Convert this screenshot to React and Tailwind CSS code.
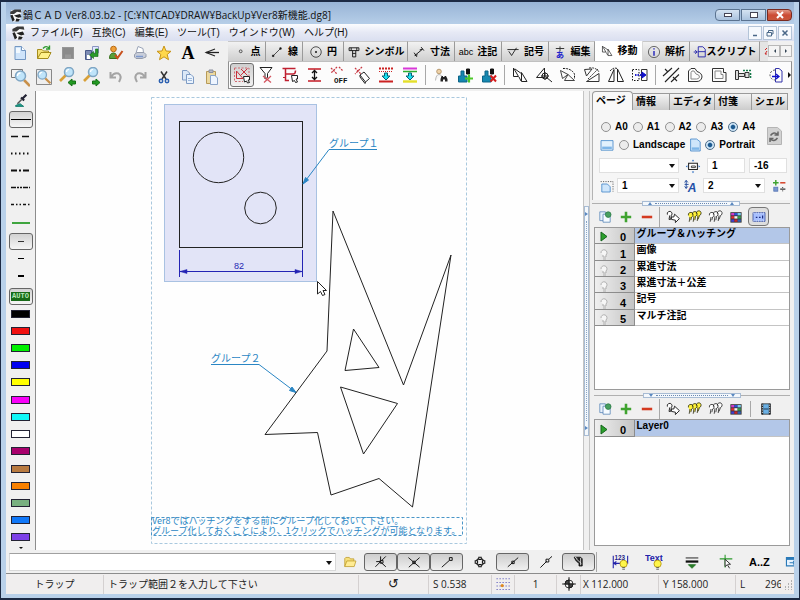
import React from "react";

const UI = "font-['Open_Sans','Noto_Sans_CJK_JP',sans-serif]";
const GOTHIC = "font-['Liberation_Sans','Noto_Sans_CJK_JP',sans-serif]";

/* ---------- drawing helpers ---------- */

function Icon({ size = 20, children }) {
  return (
    <svg width={size} height={size} viewBox="0 0 20 20" fill="none" stroke="#111" strokeWidth="1" className="shrink-0" aria-hidden="true">
      {children}
    </svg>
  );
}

const Lens = () => (
  <>
    <path d="M12 12 L18 18" stroke="#c8904a" strokeWidth="2.6" />
    <circle cx="8.500" cy="8" r="5" fill="#bfe4fa" stroke="#7fa6c4" strokeWidth="1.500" />
    <path d="M5.500 8 A3 3 0 0 1 8.500 5" stroke="#fff" strokeWidth="1.300" />
  </>
);
const SmallLens = () => (
  <>
    <path d="M9 9 L3 15" stroke="#d8a038" strokeWidth="2.6" />
    <circle cx="12" cy="6" r="4.500" fill="#bfe4fa" stroke="#7fa6c4" strokeWidth="1.500" />
    <path d="M9.500 6 A2.500 2.500 0 0 1 12 3.500" stroke="#fff" strokeWidth="1.200" />
  </>
);
const People = () => (
  <>
    <path d="M3.500 17 V11 H6 V6 H9 V11 H12 V17 Z" fill="#1688b0" stroke="#0c6488" />
    <path d="M11.500 4 h3 v5 h-3 z" fill="#111" />
  </>
);
const Bulb = () => (
  <>
    <circle cx="14" cy="12" r="4" fill="#fff64a" stroke="#b89a10" />
    <path d="M12.500 16 h3 M12.500 18 h3" stroke="#555" />
  </>
);
const RedRow = () => <path d="M3 16.500 H17" stroke="#c22" strokeWidth="2" />;
const Arrow = () => <path d="M8.500 8 h3 v3 h2.500 l-4 4 l-4 -4 h2.500 z" fill="#18e0f0" stroke="#0a6070" />;

const ICONS = {
  doc: (
    <>
      <path d="M5 3.500 H11.500 L15.500 7.500 V16.500 H5 Z" fill="#cfe4fa" stroke="#7397c2" />
      <path d="M11.500 3.500 V7.500 H15.500" fill="#fff" stroke="#7397c2" />
      <path d="M6 5 h4 v5 h-4z" fill="#f2f9ff" stroke="none" />
    </>
  ),
  open: (
    <>
      <path d="M3.500 15.500 V6.500 H8 L9.500 8 H14.500 V10" fill="#f5e27a" stroke="#a58c1c" />
      <path d="M3.500 15.500 L7 9.500 H17 L14 15.500 Z" fill="#fff08a" stroke="#a58c1c" />
      <path d="M9 5.500 Q12 2 15 5 M15.500 2.500 V6 H12" stroke="#2f9a2f" strokeWidth="1.400" />
    </>
  ),
  save: (
    <>
      <rect x="4.500" y="4.500" width="11" height="11" fill="#8b8b8b" stroke="#979797" />
      <path d="M7 11.500 h6 v4 h-6 z" fill="#999" stroke="none" />
    </>
  ),
  saveas: (
    <>
      <path d="M10.500 3.500 H16.500 V10 H10.500 Z" fill="#dfe8ff" stroke="#8a94c0" />
      <path d="M3.500 7.500 H9.500 V16.500 H3.500 Z" fill="#7d8cb4" stroke="#4a5a88" />
      <path d="M5 12 h3 v4 h-3z" fill="#fff" stroke="none" />
      <path d="M7.500 12 L11.500 8.500 V10.500 H13.500 V6 H16 V13.500 H11.500 V15.500 Z" fill="#2a9a2a" stroke="#116611" strokeWidth=".6" />
    </>
  ),
  usercheck: (
    <>
      <circle cx="7.500" cy="6" r="2.800" fill="#f0a038" stroke="#b86a10" />
      <path d="M3.500 15.500 Q3.500 10 7.500 10 Q11 10 11 15.500 Z" fill="#58a038" stroke="#38701c" />
      <path d="M9 12 L11.500 15 L16.500 8" stroke="#c8501c" strokeWidth="2" />
    </>
  ),
  print: (
    <>
      <path d="M6 10 L8 3.500 L13 5.500 L13.500 10" fill="#fff" stroke="#9aa4b8" />
      <path d="M4.500 11.500 L7 9.500 H14 L16 11.500 V14 L12 15.500 H6 L4.500 14 Z" fill="#c9ceda" stroke="#959cac" />
      <path d="M6 13.500 h7" stroke="#7d98cc" strokeWidth="1.500" />
    </>
  ),
  star: <path d="M10 3 L12 8 L17 8.300 L13.200 11.500 L14.500 16.700 L10 13.800 L5.500 16.700 L6.800 11.500 L3 8.300 L8 8 Z" fill="#ffd84c" stroke="#c89418" />,
  leader: (
    <>
      <path d="M4 9.500 H17" stroke="#222" strokeWidth="1.300" />
      <path d="M13 6 L4 9.500 L13 13" stroke="#222" strokeWidth="1.100" />
    </>
  ),
  zoomwin: (
    <>
      <path d="M1.500 2.500 H12.500 V10.500 H1.500 Z" fill="#f4f4f4" stroke="#777" />
      <g transform="translate(2 1)"><Lens /></g>
    </>
  ),
  zoomfit: (
    <>
      <path d="M2.500 2.500 H17.500 V17.500 H2.500 Z" fill="#eee" stroke="#888" />
      <g transform="translate(1 1) scale(.85)"><Lens /></g>
    </>
  ),
  zoomprev: (
    <>
      <g transform="translate(-1 -1)"><SmallLens /></g>
      <path d="M10 15.500 L14 12 V14 H17.500 V17 H14 V19 Z" fill="#229a22" stroke="#157015" />
    </>
  ),
  zoomnext: (
    <>
      <g transform="translate(-1 -1)"><SmallLens /></g>
      <path d="M18 15.500 L14 12 V14 H10.500 V17 H14 V19 Z" fill="#229a22" stroke="#157015" />
    </>
  ),
  undo: <path d="M4.500 5 V10.500 H10 M5 10 Q8 5 12.500 6.500 Q16.500 9 13 15" stroke="#a4a4a4" strokeWidth="2" />,
  redo: <path d="M15.500 5 V10.500 H10 M15 10 Q12 5 7.500 6.500 Q3.500 9 7 15" stroke="#a4a4a4" strokeWidth="2" />,
  cut: (
    <>
      <path d="M7 4.500 L12 12 M13 4.500 L8 12" stroke="#333" strokeWidth="1.500" />
      <circle cx="7" cy="14" r="1.700" stroke="#2a5fb0" strokeWidth="1.500" />
      <circle cx="13" cy="14" r="1.700" stroke="#2a5fb0" strokeWidth="1.500" />
    </>
  ),
  copy: (
    <>
      <path d="M4.500 3.500 H9 L11.500 6 V13 H4.500 Z" fill="#dbe8f7" stroke="#7f9cc4" />
      <path d="M8.500 7.500 H13 L15.500 10 V16.500 H8.500 Z" fill="#eaf3fd" stroke="#7f9cc4" />
      <path d="M10 11.500 h4 M10 13.500 h4" stroke="#9db8dc" />
    </>
  ),
  paste: (
    <>
      <path d="M4.500 4.500 H13.500 V16.500 H4.500 Z" fill="#ecd9a0" stroke="#b79a58" />
      <path d="M7 3 h4 v2.500 h-4 z" fill="#b8bcc8" stroke="#8a8e9c" />
      <path d="M8.500 8.500 H13 L15.500 11 V17.500 H8.500 Z" fill="#eef5ff" stroke="#8aa4c8" />
    </>
  ),
  trap: (
    <>
      <path d="M2.500 3 H17 V12 M2.500 3 V16.500 H11" stroke="#d06a70" strokeDasharray="2 1.500" />
      <path d="M4.500 6 V13.500 H11 Z M9 10 L15.500 3.500 M9 4 L15.500 10.500" stroke="#c8303c" />
      <path d="M11.500 11.500 H17.500 V15 H16 L17.500 17.500 L15.500 18 L14.500 16 L12.500 17 Z" stroke="#222" fill="#fff" />
    </>
  ),
  filter: (
    <>
      <path d="M4 2.500 H16 L11.500 8.500 V12.500 L9 14 V8.500 Z" fill="#fff" stroke="#222" />
      <path d="M7 11 L15 17.500 M15 11 L8 17.500" stroke="#d45560" strokeWidth="1.300" />
    </>
  ),
  path: (
    <>
      <path d="M2.500 3.500 H15.500 M5.500 3.500 V15.500 H9 M5.500 9 H13 Q15.500 9 15.500 5.500" stroke="#c02030" strokeWidth="1.500" />
      <path d="M3 12.500 h2" stroke="#c02030" />
      <path d="M11.500 10.500 H17.500 V14 H16 L17.500 17 L15.500 17.500 L14.500 15.500 L12.500 16.500 Z" stroke="#222" fill="#fff" />
    </>
  ),
  stretch: (
    <>
      <path d="M4 4 H17 M4 16 H17" stroke="#c41a24" strokeWidth="1.500" />
      <path d="M10.500 6 V14 M8 8 L10.500 5.500 L13 8 M8 12 L10.500 14.500 L13 12" stroke="#111" strokeWidth="1.300" />
    </>
  ),
  off: (
    <>
      <path d="M3 3 L9 9 M9 2 L3 8 M11 2 L15 6" stroke="#c83a44" strokeDasharray="2 1" strokeWidth="1.300" />
      <text x="6" y="17.500" fontSize="7.500" fontWeight="700" fontFamily="Liberation Mono" fill="#111" stroke="none">OFF</text>
    </>
  ),
  erase: (
    <>
      <path d="M3 3 L9 9 M10 2 L3 9" stroke="#c83a44" strokeDasharray="2 1" strokeWidth="1.300" />
      <path d="M8 10 L12 7 L17.500 13.500 L13.500 17 Z M8 10 V12 L13 18.500 L13.500 17" fill="#fff" stroke="#222" />
    </>
  ),
  dashdown: (
    <>
      <path d="M3 3.500 H17" stroke="#c22" strokeWidth="2" strokeDasharray="2 1" />
      <path d="M3 6.500 H17" stroke="#c22" strokeDasharray="1 1" />
      <Arrow />
      <RedRow />
    </>
  ),
  colordown: (
    <>
      <path d="M3 3.500 H17" stroke="#d838d8" strokeWidth="2" />
      <path d="M3 6.500 H17" stroke="#2fae2f" strokeWidth="1.500" />
      <Arrow />
      <path d="M3 16.500 H17" stroke="#e4e02a" strokeWidth="2.400" />
    </>
  ),
  finduser: (
    <>
      <circle cx="8" cy="6.500" r="2.300" fill="#efd2a8" stroke="#b89a70" />
      <path d="M4.500 15.500 Q5 9.500 8 9.500 Q10 9.500 10.500 11" fill="#f6f6f6" stroke="#bbb" />
      <path d="M9.500 14 l1-3 l1.500 0 v1 h1.500 v-1 h1.500 l1.500 3 v2.500 h-2.500 v-2 h-2 v2 h-2.500z" fill="#222" stroke="none" />
    </>
  ),
  adduser: (
    <>
      <People />
      <path d="M14 9.500 V17.500 M10 13.500 H18" stroke="#4cc828" strokeWidth="2.200" />
    </>
  ),
  deluser: (
    <>
      <People />
      <path d="M11.500 10.500 L17 16.500 M17 10.500 L11.500 16.500" stroke="#d41c1c" strokeWidth="2" />
    </>
  ),
  move: <path d="M3.500 3 V11.500 H8.500 Z M11.500 7.500 V16.500 H17 Z M5 4 L12 9 M9 12 L11 16" stroke="#222" />,
  movept: (
    <>
      <path d="M10.500 3 V12.500 H2.500 Z" stroke="#222" />
      <circle cx="11" cy="11" r="3" stroke="#222" />
      <path d="M11 7 V15 M7 11 H15 M12 12 L18 17" stroke="#222" />
    </>
  ),
  rotate: (
    <>
      <path d="M2.500 5.500 L10 9.500 L4.500 13.500 Z M6.500 15.500 H16.500 L10 9.500 Z" stroke="#444" />
      <path d="M5 3.500 Q13 3 16.500 9 V14" strokeDasharray="2 1" />
    </>
  ),
  rotate2: (
    <>
      <path d="M2.500 4.500 L10 4 L4.500 11 Z M4.500 16.500 L17 8.500 V16.500 Z" stroke="#333" />
      <path d="M6 14 L16 4 M7 3 Q14 2 17 7" strokeDasharray="2 1" stroke="#333" />
    </>
  ),
  mirror: (
    <>
      <path d="M8 4.500 V16.500 H2.500 Z M11.500 4 L17.500 16.500 H11.500 Z" stroke="#222" />
      <path d="M4 6 Q8 1.500 12 4" strokeDasharray="2 1" />
    </>
  ),
  copymove: (
    <>
      <path d="M2.500 4.500 H9 V15.500 H2.500 Z" strokeDasharray="1.500 1.500" />
      <path d="M11.500 4.500 H17 V15.500 H11.500 Z" fill="#fff" stroke="#333" />
      <path d="M5 10 H13" stroke="#22c" strokeWidth="2" strokeDasharray="1.500 1" />
      <path d="M12 7 L16 10 L12 13 Z" fill="#11c" stroke="#11c" />
    </>
  ),
  parallel: <path d="M2 11 L11 3 M4 17 L18 3 M10 17 L18 9.500 M4 4 L7 7 M12 12 l4 4" stroke="#222" strokeWidth="1.100" />,
  offset: (
    <>
      <path d="M3.500 6 L6 3.500 H10 L12 6.500 Q17 8 17 12 Q16 16.500 12 16.500 H3.500 Z" stroke="#333" />
      <path d="M6 7.500 L7 6 H9 L11 9 Q14.500 9.500 14.500 12 Q14 14 11.500 14 H6 Z" stroke="#888" />
    </>
  ),
  offset2: (
    <>
      <path d="M3.500 3.500 H14.500 V7.500 H17 V16.500 H3.500 Z" stroke="#333" />
      <path d="M6 6 H12 V9.500 H14 V13.500 H6 Z" stroke="#888" />
    </>
  ),
  bolt: (
    <>
      <path d="M2.500 5.500 H5.500 V14.500 H2.500 Z M5.500 8.500 H11.500 V11.500 H5.500 Z M12 7.500 H16 V12.500 H12 Z" stroke="#333" fill="#ddd" />
      <path d="M10 5.500 H18 M17.500 8 v5" stroke="#167a4a" strokeWidth="1.600" strokeDasharray="2 1" />
    </>
  ),
  convert: (
    <>
      <path d="M10 5 A5 5 0 1 0 10 15" strokeDasharray="2 1.500" stroke="#555" />
      <path d="M10.500 3.500 H14 L17 6 V17 H10.500 Z" stroke="#33a" />
      <path d="M7 11.500 H13 M11 9 l3 2.500 l-3 2.500" stroke="#11c" strokeWidth="1.300" />
    </>
  ),
  dot: <circle cx="11" cy="9" r="2" stroke="#222" />,
  line: <path d="M4.500 15.500 L15 5 M3.500 14.500 h2 v2 h-2z M14 4 h2 v2 h-2z" fill="#222" strokeWidth="1" />,
  circle: (
    <>
      <circle cx="10" cy="10" r="7.500" />
      <circle cx="10" cy="10" r="1" fill="#111" />
    </>
  ),
  symbol: <path d="M3 4 H17 V8 H3 Z M8 8 V17 H12.500 V8 M8 12 H12.500 M6 4 v4 M14 4 v4" strokeWidth="1.300" />,
  dim: <path d="M4 15 L15 6 M3 11 L7 17 M13 3 L17 8 M4 15 l4-1 M15 6 l-4 1" strokeWidth="1.300" />,
  check: <path d="M2 6.500 H18 M4 9 L8 15 L15 4" strokeWidth="1.200" />,
  edit: (
    <>
      <path d="M4 5 H16 M10 2 V9" stroke="#333" strokeWidth="1.400" />
      <text x="4" y="18" fontSize="12" fontWeight="700" fontFamily="Noto Sans CJK JP" fill="#22c" stroke="none">あ</text>
    </>
  ),
  info: (
    <>
      <circle cx="10" cy="10" r="8" stroke="#333" />
      <path d="M10 4.500 v2 M10 8.500 v7" stroke="#22b" strokeWidth="2" />
    </>
  ),
  script: (
    <>
      <path d="M7.500 2.500 H14 L17.500 6 V17 H7.500 V2.500 M7.500 9.500 H17.500" stroke="#22a" strokeWidth="1.300" />
      <path d="M1 10 H6 M3 7.500 L6 10 L3 12.500" stroke="#22a" strokeWidth="1.300" />
    </>
  ),
  picker: (
    <>
      <path d="M16 3 L12 7 M13.500 9.500 L10 6" stroke="#223" strokeWidth="2.400" />
      <path d="M11 8 L6 13" stroke="#555" strokeWidth="1.600" />
      <path d="M4 15 L9 13 L13 16 H4 Z" fill="#1c9a8a" stroke="#147a6c" />
    </>
  ),
  layers: (
    <>
      <path d="M3.500 3.500 H10.500 V14.500 H3.500 Z" fill="#e8f1fb" stroke="#5a86b8" />
      <path d="M7.500 6.500 H16.500 V16.500 H7.500 Z" fill="#f6fbff" stroke="#5a86b8" />
      <circle cx="14" cy="7" r="3.500" fill="#48a060" stroke="#2a7a44" />
    </>
  ),
  plus: <path d="M10 3.500 V16.500 M3.500 10 H16.500" stroke="#3fa32f" strokeWidth="3.200" />,
  minus: <path d="M3.500 10 H16.500" stroke="#d43a20" strokeWidth="3.200" />,
  hand: <path d="M3 7 a3 3 0 1 1 5 1 l-1 5 h-2 l1 -5 M8 13 V10 H11 L12 6.500 L18 12 L13 17 V14 Z" stroke="#222" strokeWidth="1.200" fill="#fff" />,
  bulbson: <path d="M3 8 a3 3 0 1 1 4 2 l-1 4 M8 7 a3 3 0 1 1 4 2 l-1 5 M13 6 a3 3 0 1 1 4 2 l-2 5 M5 10 l-1 6 M10 9 l-1 7 M15 8 l-1 7" fill="#fff23a" stroke="#2c2c10" />,
  bulbsoff: <path d="M3 8 a3 3 0 1 1 4 2 l-1 4 M8 7 a3 3 0 1 1 4 2 l-1 5 M13 6 a3 3 0 1 1 4 2 l-2 5 M5 10 l-1 6 M10 9 l-1 7 M15 8 l-1 7" fill="#fff" stroke="#222" />,
  palette: (
    <g stroke="none">
      <rect x="3" y="4" width="14" height="13" fill="#333" />
      <rect x="4" y="5" width="4" height="3" fill="#d03ac8" />
      <rect x="8" y="5" width="4" height="3" fill="#2c50d8" />
      <rect x="12" y="5" width="4" height="3" fill="#7ad0f0" />
      <rect x="4" y="9" width="4" height="3" fill="#e03030" />
      <rect x="8" y="9" width="4" height="3" fill="#f4f4f4" />
      <rect x="12" y="9" width="4" height="3" fill="#34a048" />
      <rect x="4" y="13" width="4" height="3" fill="#4040d0" />
      <rect x="8" y="13" width="4" height="3" fill="#c82828" />
      <rect x="12" y="13" width="4" height="3" fill="#3060b8" />
    </g>
  ),
  film2: (
    <>
      <path d="M2.500 4.500 H17.500 V15.500 H2.500 Z" fill="#a8c0ff" stroke="#3a50a0" />
      <path d="M3 5 H18 M3 15 H18" stroke="#fff" strokeDasharray="1 2" strokeWidth="1.500" />
      <path d="M6 10.500 h2 M10 10.500 h2 M14.500 8 v4" stroke="#1c2c80" strokeWidth="1.500" />
    </>
  ),
  film: (
    <>
      <path d="M4.500 3.500 H15.500 V16.500 H4.500 Z" fill="#6ab0e4" stroke="#333" />
      <path d="M5.500 3.500 V17 M14.500 3.500 V17" stroke="#222" strokeWidth="2" />
      <path d="M5.500 4.500 V16 M14.500 4.500 V16" stroke="#eee" strokeDasharray="1.500 1.500" />
      <path d="M7 10 h6" stroke="#123" />
    </>
  ),
  landscape: (
    <>
      <path d="M2.500 4.500 H17.500 V16.500 H2.500 Z" fill="#e2f1fd" stroke="#3f84c8" />
      <path d="M4 13.500 H16" stroke="#7eb6e8" strokeWidth="3" />
    </>
  ),
  portrait: (
    <>
      <path d="M4.500 2.500 H12 L16.500 6 V17.500 H4.500 Z" fill="#cfe6fb" stroke="#3f84c8" />
      <path d="M6 14.500 H15" stroke="#7eb6e8" strokeWidth="3" />
    </>
  ),
  refresh: (
    <>
      <path d="M3.500 1.500 H13.500 L17.500 5 V18.500 H3.500 Z" fill="#d2d2d2" stroke="#b4b4b4" />
      <path d="M6.500 9.500 Q10 5 13.500 8.500 M14 5.500 V9 H10.500 M13.500 12 Q10 16.500 6.500 13 M6 16 V12.500 H9.500" stroke="#666" strokeWidth="1.500" />
    </>
  ),
  screen: (
    <>
      <path d="M4.500 6.500 H15.500 V14.500 H4.500 Z" fill="#fff" stroke="#222" strokeWidth="1.300" />
      <path d="M8 10 h5 v2 h-5 z" stroke="#222" />
      <path d="M10 2 l1.500 2 h-3z M10 19 l1.500-2 h-3z M1 10.500 l2-1.500 v3z M19 10.500 l-2-1.500 v3z" fill="#2468c0" stroke="none" />
    </>
  ),
  pagesize: (
    <>
      <path d="M2 4.500 H17.500 V17" stroke="#444" strokeDasharray="1.500 1.500" />
      <path d="M3.500 7.500 H10.500 L14 11 V17.500 H3.500 Z" fill="#cfe6fb" stroke="#3f84c8" />
    </>
  ),
  fontheight: (
    <>
      <path d="M4 3 V13 M2 5.500 L4 3 L6 5.500 M2 10.500 L4 13 L6 10.500 M2 8 H7" stroke="#234a9c" strokeWidth="1.200" />
      <text x="6" y="17" fontSize="15" fontWeight="700" fontStyle="italic" fontFamily="Liberation Sans" fill="#2450a8" stroke="none">A</text>
    </>
  ),
  calc: (
    <>
      <path d="M6 2.500 V9.500 M2.500 6 H9.500" stroke="#3fa32f" strokeWidth="1.800" />
      <path d="M11.500 6 H18" stroke="#d43a20" strokeWidth="1.800" />
      <rect x="3.500" y="11.500" width="5" height="5" fill="#7a98d0" stroke="#5474b4" />
      <path d="M11.500 14 H18 M14.500 11.500 v1 M14.500 15.500 v1" stroke="#333" strokeWidth="1.500" />
    </>
  ),
  folder: (
    <>
      <path d="M2.500 16.500 V5 L4 3.500 H9 L10.500 5.500 H15.500 V8.500" fill="#f5df7c" stroke="#b8941c" />
      <path d="M2.500 16.500 L5.500 8.500 H18.500 L16 16.500 Z" fill="#ffec94" stroke="#b8941c" />
    </>
  ),
  snapFoot: <path d="M3 16 L16 3 M4 9.500 H9 L16 16 M9.500 3 V8 M9 8 h3.500 v3.500 h-3.500z" strokeWidth="1.200" />,
  snapX: <path d="M3 4.500 L17 16.500 M3.500 16.500 L17 4.500 M8.500 9 h3 v3 h-3z" strokeWidth="1.200" />,
  snapEnd: <path d="M3.500 16.500 L13 8 M13 4.500 h3.500 v3.500 h-3.500 z" strokeWidth="1.200" />,
  snapQuad: (
    <>
      <circle cx="10" cy="10" r="4.500" strokeWidth="1.300" />
      <path d="M8.500 4 h3 v3 h-3z M8.500 13 h3 v3 h-3z M4 8.500 h3 v3 h-3z M13 8.500 h3 v3 h-3z" fill="#fff" strokeWidth="1.300" />
    </>
  ),
  snapMid: <path d="M3.500 16 L16.500 4.500 M8.500 9 h3 v3 h-3 z" fill="#fff" strokeWidth="1.200" />,
  snapNear: <path d="M3 17 L11 9 M10 6.500 h3.500 v3.500 h-3.500z M14 6 L17.500 3" strokeWidth="1.200" />,
  magnet: (
    <>
      <path d="M4 4 H12 L14 6 V15 H10 V12 L6 8 Z" fill="#222" />
      <path d="M6 5.500 L13 12 M12 5 v9 M5 4 l3 2" stroke="#eee" />
    </>
  ),
  dimbulb: (
    <>
      <text x="4" y="8" fontSize="7" fontWeight="700" fontFamily="Liberation Sans" fill="#228" stroke="none">123</text>
      <path d="M2.500 3 V17 M3 11.500 H15 M6 9.500 L3 11.500 L6 13.500 M18.500 3 V12" stroke="#22a" strokeWidth="1.200" />
      <Bulb />
    </>
  ),
  textbulb: (
    <>
      <text x="0" y="9" fontSize="10" fontWeight="700" fontFamily="Liberation Sans" fill="#22a" stroke="none">Text</text>
      <Bulb />
    </>
  ),
  lineweight: (
    <>
      <path d="M3 5.500 H17" strokeWidth="1" />
      <path d="M3 9.500 H17" strokeWidth="2.500" />
      <path d="M6 13 H14 L10 17 Z" fill="#2a7a2a" stroke="#2a7a2a" />
    </>
  ),
  crosshair: (
    <>
      <path d="M3 6.500 H17 M9 2 V16" stroke="#2a9a2a" strokeWidth="1.200" />
      <path d="M9 7 V15 L11.500 13 L14 17 M9 7 L15 12.500 H12" stroke="#222" fill="#fff" />
    </>
  ),
  window: (
    <>
      <path d="M3.500 3.500 H17 V15.500 H3.500 Z" fill="#e8f4ff" stroke="#2a7ab8" strokeWidth="1.600" />
      <path d="M3 5.500 H17" stroke="#2a7ab8" strokeWidth="3" />
      <path d="M8 11 H16 M13 8.500 L16 11 L13 13.500" stroke="#2a7ab8" strokeWidth="1.500" />
    </>
  ),
  gridsnap: (
    <>
      <path d="M2 3.500 H19 M2 8 H19 M2 12.500 H19 M2 17 H19" stroke="#4c4cb8" strokeWidth="1.300" strokeDasharray="1.300 2.450" />
      <circle cx="9" cy="12" r="2" fill="#e08a20" stroke="none" />
    </>
  ),
  origin: (
    <>
      <circle cx="10" cy="10" r="5" />
      <path d="M10 1.500 V18.500 M1.500 10 H18.500" strokeWidth="1.300" />
      <path d="M10 10 V5 A5 5 0 0 0 5 10 Z M10 10 V15 A5 5 0 0 0 15 10 Z" fill="#444" />
    </>
  ),
  logo: (
    <g stroke="none">
      <path d="M4 3 H18 V7 L14 10 L17 14 L13 18 H7 L4 13 Z" fill="#f8f8f8" />
      <path d="M3 5 L9 2 H17 L18 6 L12 5 L8 8 L3 8 Z" fill="#3a3a3a" />
      <path d="M8 10 L16 8 L18 12 L14 13 L11 12 Z M3 10 L6 9 L9 16 L6 18 Z M11 14 L16 15 L14 18 H10 Z" fill="#222" />
    </g>
  ),
};

function Tool({ icon, name, pressed = false, size = 20 }) {
  return (
    <button
      type="button"
      aria-label={name ?? icon}
      aria-pressed={pressed || undefined}
      className={`flex h-6 w-6 shrink-0 items-center justify-center ${pressed ? "rounded-[3px] border border-[#6f6f6f] bg-linear-to-b from-[#cfcfcf] to-[#f2f2f2]" : ""}`}
    >
      <Icon size={size}>{ICONS[icon]}</Icon>
    </button>
  );
}

const Sep = () => <span className="mx-0.5 h-5 w-px shrink-0 bg-[#a8a8a8]" />;

/* ---------- title and menu ---------- */

function TitleBar() {
  const btn = "flex h-3 w-[25px] items-center justify-center border border-[#5b7390] bg-linear-to-b from-[#d5e3f2] to-[#a9c2de]";
  return (
    <header className="flex h-[22px] shrink-0 items-center bg-linear-to-b from-[#98b4d6] to-[#b6cee8] pt-1 pl-0.5">
      <Icon size={15}>{ICONS.logo}</Icon>
      <h1 className={`flex-1 truncate text-[10px] leading-4 text-[#111] ${UI}`}>
        鍋ＣＡＤ Ver8.03.b2 - [C:¥NTCAD¥DRAW¥BackUp¥Ver8新機能.dg8]
      </h1>
      <div className="mr-0.5 flex gap-px">
        <button type="button" aria-label="Minimize" className={`${btn} rounded-l-sm`}>
          <span className="h-1 w-2 border border-[#445] bg-white" />
        </button>
        <button type="button" aria-label="Maximize" className={btn}>
          <span className="h-1.5 w-2 border border-[#445] bg-white" />
        </button>
        <button type="button" aria-label="Close" className="flex h-3 w-[25px] items-center justify-center rounded-r-sm border border-[#7a2a20] bg-linear-to-b from-[#e09a88] via-[#cc4c34] to-[#c8583c]">
          <svg width="8" height="8" viewBox="0 0 8 8" aria-hidden="true"><path d="M1 1 L7 7 M7 1 L1 7" stroke="#fff" strokeWidth="2" /></svg>
        </button>
      </div>
    </header>
  );
}

const MENUS = ["ファイル(F)", "互換(C)", "編集(E)", "ツール(T)", "ウインドウ(W)", "ヘルプ(H)"];

function MenuBar() {
  const mdi = "flex h-[14px] w-[14px] items-center justify-center border border-[#b4c4d8] bg-[#f6f9fd]";
  return (
    <nav className="flex h-[17px] shrink-0 items-center bg-linear-to-b from-[#fbfcfe] via-[#e6e9f5] to-[#dadff0] pl-1">
      <Icon size={16}>{ICONS.logo}</Icon>
      <div className={`ml-1 flex flex-1 gap-[9px] text-[10px] leading-4 text-[#111] ${GOTHIC}`}>
        {MENUS.map((m) => (
          <button key={m} type="button" className="whitespace-nowrap">{m}</button>
        ))}
      </div>
      <div className="mr-0.5 flex gap-px">
        <button type="button" aria-label="Minimize drawing" className={mdi}>
          <svg width="8" height="8" viewBox="0 0 8 8" aria-hidden="true"><path d="M2 6.500 H6" stroke="#4a6888" strokeWidth="1.500" /></svg>
        </button>
        <button type="button" aria-label="Restore drawing" className={mdi}>
          <svg width="8" height="8" viewBox="0 0 8 8" fill="none" stroke="#4a6888" aria-hidden="true"><path d="M2.500 3 V1.500 H7 V5 H5.500 M1 3.500 H5.500 V7 H1 Z" /></svg>
        </button>
        <button type="button" aria-label="Close drawing" className={mdi}>
          <svg width="8" height="8" viewBox="0 0 8 8" aria-hidden="true"><path d="M1.500 1.500 L6.500 6.500 M6.500 1.500 L1.500 6.500" stroke="#4a6888" strokeWidth="1.500" /></svg>
        </button>
      </div>
    </nav>
  );
}

/* ---------- toolbars ---------- */

const ROW_A = ["doc", "open", "save", "saveas", "usercheck", "print", "star", "A", "leader"];
const ROW_B = ["zoomwin", "zoomfit", "zoomprev", "zoomnext", "undo", "redo", "cut", "copy", "paste"];

const TABS = [
  { label: "点", icon: "dot", w: "w-[38px]" },
  { label: "線", icon: "line", w: "w-[37px]" },
  { label: "円", icon: "circle", w: "w-[41px]" },
  { label: "シンボル", icon: "symbol", w: "w-[64px]" },
  { label: "寸法", icon: "dim", w: "w-[47px]" },
  { label: "注記", icon: "abc", w: "w-[47px]" },
  { label: "記号", icon: "check", w: "w-[47px]" },
  { label: "編集", icon: "edit", w: "w-[46px]" },
  { label: "移動", icon: "move", w: "w-[48px]", active: true },
  { label: "解析", icon: "info", w: "w-[47px]" },
  { label: "スクリプト", icon: "script", w: "w-[70px]" },
];

const MOVE_TOOLS = [
  "trap", "filter", "path", "stretch", "off", "erase", "dashdown", "colordown", "|",
  "finduser", "adduser", "deluser", "|",
  "move", "movept", "rotate", "rotate2", "mirror", "copymove", "|",
  "parallel", "offset", "offset2", "bolt",
];

function Toolbars() {
  return (
    <section className="flex h-[50px] shrink-0 bg-[#f0f0f0]">
      <div className="grid w-[222px] shrink-0 grid-cols-9 content-start pr-1 pl-0.5">
        {ROW_A.map((i) =>
          i === "A" ? (
            <button key={i} type="button" className="h-6 w-6 font-['Liberation_Serif',serif] text-lg leading-6 font-bold text-black">A</button>
          ) : (
            <Tool key={i} icon={i} />
          )
        )}
        {ROW_B.map((i) => <Tool key={i} icon={i} />)}
      </div>
      <div className="flex min-w-0 flex-1 flex-col pr-0.5">
        <div className="flex h-5 shrink-0 items-stretch">
          <div role="tablist" className="flex min-w-0 flex-1 overflow-hidden">
            {TABS.map((t) => (
              <button
                key={t.label}
                type="button"
                role="tab"
                aria-selected={!!t.active}
                className={`flex shrink-0 items-center justify-center border-r text-[10px] leading-4 font-bold whitespace-nowrap text-black ${GOTHIC} ${t.w} ${t.icon === "script" ? "gap-0" : "gap-1"} ${t.active ? "border-[#d8d8d8] bg-white" : "border-t border-r-[#9a9a9a] border-t-[#c8c8c8] bg-linear-to-b from-[#f2f2f2] to-[#cfcfcf]"}`}
              >
                {t.icon === "abc" ? <span className="text-[9px] font-normal">abc</span> : <Icon size={14}>{ICONS[t.icon]}</Icon>}
                {t.label}
              </button>
            ))}
            <span className="flex flex-1 items-center justify-end border-t border-[#c8c8c8] bg-[#e4e4e4]">
              <svg width="4" height="8" aria-hidden="true"><path d="M3 0 L1 2 M3 3 L1 6 H3" stroke="#c22" fill="none" /></svg>
            </span>
          </div>
          <button type="button" aria-label="Previous tabs" className="my-1 flex w-[12px] items-center justify-center border border-[#b8b8b8] bg-[#f4f4f4]">
            <svg width="5" height="6" aria-hidden="true"><path d="M4 1 V5 L2 3 Z" fill="#345" /></svg>
          </button>
          <button type="button" aria-label="Next tabs" className="my-1 flex w-[12px] items-center justify-center border border-[#b8b8b8] bg-[#f4f4f4]">
            <svg width="5" height="6" aria-hidden="true"><path d="M1 1 V5 L3 3 Z" fill="#345" /></svg>
          </button>
        </div>
        <div className="flex h-7 items-center overflow-hidden border border-[#8f8f8f] border-t-[#c0c0c0] bg-[#fcfcfc] pl-px">
          {MOVE_TOOLS.map((i, n) => (i === "|" ? <span key={n} className="flex w-[7px] shrink-0 justify-center"><Sep /></span> : <Tool key={i} icon={i} pressed={i === "trap"} />))}
          <span className="w-2 shrink-0" />
          <Tool icon="convert" />
          <svg width="5" height="8" className="shrink-0" aria-hidden="true"><path d="M1 1 V7 L4 4 Z" fill="#111" /></svg>
        </div>
      </div>
    </section>
  );
}

/* ---------- left palette ---------- */

const LINE_TYPES = [
  { name: "dash", dash: "7 4", w: 1.5 },
  { name: "dot", dash: "1.500 2.500", w: 2 },
  { name: "chain", dash: "6 2 2 2", w: 2 },
  { name: "chain2", dash: "5 1 2 1 2 1", w: 1.5 },
  { name: "chain3", dash: "3 2 1.500 2 1.500 2", w: 1.5 },
];

const COLORS = [
  "bg-black", "bg-[#f01010]", "bg-[#00f000]", "bg-[#0000f0]", "bg-[#ffff00]", "bg-[#f800f8]", "bg-[#10f8f8]",
  "bg-white", "bg-[#a8006c]", "bg-[#b87a40]", "bg-[#f88000]", "bg-[#78b080]", "bg-[#1078f8]", "bg-[#7c40e8]",
];

function Palette() {
  const cell = "flex h-[17px] w-6 shrink-0 items-center justify-center";
  const on = "rounded-[3px] border border-[#666] bg-linear-to-b from-[#d2d2d2] to-[#f6f6f6]";
  return (
    <aside className="flex w-[30px] shrink-0 flex-col items-center overflow-hidden border-r border-[#8c8c8c] bg-[#f0f0f0]">
      <button type="button" aria-label="picker" className="flex h-5 w-6 shrink-0 items-center justify-center"><Icon size={18}>{ICONS.picker}</Icon></button>
      <button type="button" aria-label="solid" aria-pressed="true" className={`${cell} ${on}`}><span className="h-px w-5 bg-black" /></button>
      {LINE_TYPES.map((l) => (
        <button key={l.name} type="button" aria-label={l.name} className={cell}>
          <svg width="19" height="3" aria-hidden="true"><path d="M0 1.500 H19" stroke="#111" strokeWidth={l.w} strokeDasharray={l.dash} /></svg>
        </button>
      ))}
      <button type="button" aria-label="auxiliary" className="flex h-[19px] w-6 shrink-0 items-center justify-center"><span className="h-[2px] w-[18px] bg-[#3fa53f]" /></button>
      <span className="h-px shrink-0" />
      <button type="button" aria-label="thin" aria-pressed="true" className={`${cell} ${on}`}><span className="h-px w-1.5 bg-[#333]" /></button>
      <button type="button" aria-label="medium" className={cell}><span className="h-px w-1.5 bg-black" /></button>
      <button type="button" aria-label="thick" className={cell}><span className="h-0.5 w-1.5 bg-black" /></button>
      <span className="h-1 shrink-0" />
      <button type="button" aria-pressed="true" className={`${cell} ${on}`}>
        <span className="bg-[#176a17] px-px font-['Liberation_Mono',monospace] text-[7px] leading-[9px] font-bold text-[#b8e8b8]">AUTO</span>
      </button>
      <div className="flex h-[241px] shrink-0 flex-col">
        {COLORS.map((c) => (
          <button key={c} type="button" aria-label="pen colour" className="flex w-6 flex-1 items-center justify-center">
            <span className={`h-2 w-[19px] border border-[#223] ${c}`} />
          </button>
        ))}
      </div>
      <svg width="6" height="4" className="mt-px shrink-0" aria-hidden="true"><path d="M1 0 H5 L3 2 Z" fill="#111" /></svg>
    </aside>
  );
}

/* ---------- drawing ---------- */

function Canvas() {
  return (
    <main className="min-w-0 flex-1 overflow-hidden bg-[#fefefe]">
      <svg width="100%" height="100%" aria-label="drawing" fill="none" stroke="#222" strokeWidth="1">
        <g transform="translate(-36 -91)" fontFamily="'Noto Sans CJK JP', sans-serif">
          <rect x="151.500" y="97.500" width="315" height="446" stroke="#a9c8de" strokeDasharray="3 2" />
          <rect x="164.500" y="104.500" width="152" height="177" fill="#e2e4f7" stroke="#a9c2e2" />
          <rect x="179.500" y="121.500" width="123" height="126" />
          <circle cx="218.500" cy="157.500" r="25.200" />
          <circle cx="260.500" cy="208" r="15.800" />
          <g stroke="#2424b4">
            <path d="M179.500 250 V277 M302.500 250 V277 M179.500 271.500 H302.500" />
            <path d="M180 271.500 L187 269.500 V273.500 Z M302 271.500 L295 269.500 V273.500 Z" fill="#2424b4" strokeWidth=".5" />
          </g>
          <text x="234" y="269" fontSize="9" fontFamily="'Liberation Sans', sans-serif" fill="#2424b4" stroke="none">82</text>
          <g stroke="#2a86c4">
            <path d="M377 149.500 H329 L303 184" />
            <path d="M303 184 L305.500 177.500 L308.500 180 Z" fill="#2a86c4" />
            <path d="M211 364.500 H259 L296 392.500" />
            <path d="M296 392.500 L289.500 390.500 L292 387 Z" fill="#2a86c4" />
          </g>
          <g fill="#2a86c4" stroke="none">
            <text x="329" y="147" fontSize="10">グループ１</text>
            <text x="211" y="362" fontSize="10">グループ２</text>
            <text x="152" y="524" fontSize="9">Ver8ではハッチングをする前にグループ化しておいて下さい。</text>
            <text x="152" y="534" fontSize="9">グループ化しておくことにより、1クリックでハッチングが可能となります。</text>
          </g>
          <rect x="151.500" y="517.500" width="311" height="18" stroke="#4a96c8" strokeDasharray="3 2" />
          <path d="M333 211 L403.500 385 L451 255 L412.500 507 L379 478.500 L331 495 L317.500 432.500 L265 434.500 L327 351 Z" />
          <path d="M353.500 329 L379 367.500 L345 370.500 Z M340.500 387 L397.500 403.500 L363.500 454 Z" />
          <path d="M317.500 281.500 V294 L320.500 291.500 L322.500 295.500 L325 294.500 L323 290.500 H326.500 Z" fill="#fff" />
        </g>
      </svg>
    </main>
  );
}

/* ---------- right panel ---------- */

function Combo({ label, value, className }) {
  return (
    <div className={`relative h-[15px] shrink-0 ${className}`}>
      <select aria-label={label} defaultValue={value} className={`block h-[15px] w-full appearance-none border border-[#e0e0e0] bg-white pl-1 text-[10px] leading-3 font-bold text-black ${GOTHIC}`}>
        <option>{value}</option>
      </select>
      <svg width="6" height="4" className="pointer-events-none absolute top-1.5 right-1" aria-hidden="true"><path d="M0 0 H6 L3 4 Z" fill="#111" /></svg>
    </div>
  );
}

function Radio({ name, label, checked = false, className = "" }) {
  return (
    <label className={`flex shrink-0 items-center gap-1 text-[10px] leading-3 font-bold text-black ${className}`}>
      <input
        type="radio"
        name={name}
        defaultChecked={checked}
        className="h-[10px] w-[10px] appearance-none rounded-full border border-[#909090] bg-[#ececec] checked:border-[#4c6c88] checked:bg-[radial-gradient(circle,#1c5a90_30%,#cfe6f8_50%)]"
      />
      {label}
    </label>
  );
}

function Grip({ up = false }) {
  const d = up ? "M1 3 H5 L3 0 Z" : "M1 0 H5 L3 3 Z";
  return (
    <div className="flex h-1.5 shrink-0 items-center">
      <span className="h-px flex-1 bg-[#b0b0b0]" />
      <span className="flex h-[5px] w-[98px] items-center justify-between border border-[#a8bcd4] bg-[#f4f8fc] px-1">
        <svg width="6" height="3" aria-hidden="true"><path d={d} fill="#5a88c0" /></svg>
        <span className="mx-0.5 flex-1 border-t border-dotted border-[#6a88b0]" />
        <svg width="6" height="3" aria-hidden="true"><path d={d} fill="#5a88c0" /></svg>
      </span>
      <span className="h-px flex-1 bg-[#b0b0b0]" />
    </div>
  );
}

function LayerTools({ last, pressed }) {
  return (
    <div className="flex h-[21px] shrink-0 items-center overflow-hidden">
      {["layers", "plus", "minus"].map((i) => (
        <button key={i} type="button" aria-label={i} className="flex h-5 w-[21px] items-center justify-center"><Icon size={16}>{ICONS[i]}</Icon></button>
      ))}
      <Sep />
      {["hand", "bulbson", "bulbsoff", "palette"].map((i) => (
        <button key={i} type="button" aria-label={i} className="flex h-5 w-[21px] items-center justify-center"><Icon size={16}>{ICONS[i]}</Icon></button>
      ))}
      {!pressed && <span className="ml-1 h-4 w-px bg-[#a8a8a8]" />}
      <button
        type="button"
        aria-label={last}
        aria-pressed={pressed}
        className={`flex h-[19px] w-[21px] items-center justify-center ${pressed ? "ml-0.5 rounded-sm border border-[#777] bg-[#dedede]" : "ml-1"}`}
      >
        <Icon size={16}>{ICONS[last]}</Icon>
      </button>
    </div>
  );
}

function LayerTable({ rows, className = "" }) {
  return (
    <table className={`w-full border-collapse font-bold text-black ${GOTHIC} ${className}`}>
      <tbody>
        {rows.map((r, n) => (
          <tr key={r} className={n === 0 ? "bg-[#b3c7e8]" : "bg-white"}>
            <th scope="row" className="w-[39px] border-r border-b border-[#8c8c8c] bg-linear-to-r from-[#efefef] to-[#c4c4c4] p-0 align-bottom">
              <span className="flex items-end gap-[11px] pl-1">
                <svg width="10" height="12" viewBox="0 0 10 12" fill="none" aria-hidden="true">
                  {n === 0 ? (
                    <path d="M2 1 V10 L8 5.500 Z" fill="#2ca02c" stroke="#14641c" />
                  ) : (
                    <path d="M2 5 a3 3 0 1 1 5 2 v2 h-3 v-2 M4 11 h3" fill="#f6f6f6" stroke="#b0b0b0" />
                  )}
                </svg>
                <span className="text-[11px] leading-3 font-bold">{n}</span>
              </span>
            </th>
            <td className="border-b border-[#c4c4c4] p-0 pl-0.5 align-top text-[10px] leading-3">{r}</td>
          </tr>
        ))}
      </tbody>
    </table>
  );
}

const SIDE_TABS = [
  { label: "ページ", w: "w-[41px]", active: true },
  { label: "情報", w: "w-[37px]" },
  { label: "エディタ", w: "w-[45px]" },
  { label: "付箋", w: "w-[37px]" },
  { label: "シェル", w: "w-[36px]" },
];

function SidePanel() {
  const field = "h-[15px] w-[38px] border border-[#e0e0e0] bg-white pl-1 text-[10px] leading-3 font-bold";
  return (
    <aside className={`flex w-[204px] shrink-0 flex-col bg-[#f0f0f0] pr-1 pl-0.5 ${GOTHIC}`}>
      <div role="tablist" className="flex h-[19px] shrink-0 items-end text-[10px] leading-4 font-bold text-black">
        {SIDE_TABS.map((t) => (
          <button
            key={t.label}
            type="button"
            role="tab"
            aria-selected={!!t.active}
            className={`shrink-0 border-t border-r border-[#9a9a9a] pl-[3px] text-left whitespace-nowrap ${t.w} ${t.active ? "h-[19px] rounded-t-sm border-l bg-[#f8f8f8]" : "h-[17px] bg-linear-to-b from-[#f4f4f4] to-[#cccccc]"}`}
          >
            {t.label}
          </button>
        ))}
      </div>
      <div className="flex h-[90px] shrink-0 flex-col border-l border-[#b4b4b4] bg-[#f6f6f6] px-1.5 pt-2">
        <div className="flex">
          <div className="flex w-[168px] flex-col">
            <div className="flex h-[18px] items-center gap-[5px] pl-0.5">
              {["A0", "A1", "A2", "A3", "A4"].map((s) => (
                <Radio key={s} name="size" label={s} checked={s === "A4"} />
              ))}
            </div>
            <div className="flex h-[18px] items-center">
              <span className="flex w-5 shrink-0"><Icon size={16}>{ICONS.landscape}</Icon></span>
              <Radio name="orientation" label="Landscape" />
              <span className="mx-0.5 flex shrink-0"><Icon size={16}>{ICONS.portrait}</Icon></span>
              <Radio name="orientation" label="Portrait" checked />
            </div>
          </div>
          <button type="button" aria-label="refresh" className="flex h-9 flex-1 items-center justify-center"><Icon size={20}>{ICONS.refresh}</Icon></button>
        </div>
        <div className="mt-0.5 flex h-[19px] items-center">
          <Combo label="Paper" value="" className="w-20" />
          <span className="mx-1.5 flex shrink-0"><Icon size={16}>{ICONS.screen}</Icon></span>
          <input aria-label="Horizontal pages" defaultValue="1" className={`mr-1 ${field}`} />
          <input aria-label="Offset" defaultValue="-16" className={field} />
        </div>
        <div className="flex h-[21px] items-center">
          <span className="mr-0.5 flex shrink-0"><Icon size={16}>{ICONS.pagesize}</Icon></span>
          <Combo label="Scale" value="1" className="w-[62px]" />
          <span className="mx-1 flex shrink-0"><Icon size={16}>{ICONS.fontheight}</Icon></span>
          <Combo label="Text height" value="2" className="w-[62px]" />
          <button type="button" aria-label="calculate" className="ml-1.5 flex shrink-0"><Icon size={16}>{ICONS.calc}</Icon></button>
        </div>
      </div>
      <Grip up />
      <div className="flex min-h-0 flex-1 flex-col pl-0.5">
        <LayerTools last="film2" pressed />
        <div className="h-[163px] shrink-0 border border-[#9a9a9a] bg-white">
          <LayerTable rows={["グループ＆ハッチング", "画像", "累進寸法", "累進寸法＋公差", "記号", "マルチ注記"]} className="h-[98px]" />
        </div>
        <span className="h-0.5 shrink-0" />
        <Grip />
        <LayerTools last="film" pressed={false} />
        <div className="min-h-0 flex-1 border border-[#9a9a9a] bg-white">
          <LayerTable rows={["Layer0"]} className="h-[17px]" />
        </div>
        <span className="h-1 shrink-0" />
      </div>
    </aside>
  );
}

function VerticalGrip() {
  return (
    <div className="flex w-[7px] shrink-0 flex-col items-center justify-center border-x border-[#c4c4c4] bg-[#f0f0f0]">
      <span className="flex h-[230px] w-[5px] flex-col items-center justify-between border border-[#a8bcd4] bg-[#f4f8fc] py-1">
        <svg width="3" height="6" aria-hidden="true"><path d="M0 1 V5 L3 3 Z" fill="#5a88c0" /></svg>
        <span className="my-1 flex-1 border-l border-dotted border-[#8aa4c4]" />
        <svg width="3" height="6" aria-hidden="true"><path d="M0 1 V5 L3 3 Z" fill="#5a88c0" /></svg>
      </span>
    </div>
  );
}

/* ---------- bottom bars ---------- */

function Snap({ icon, on = false }) {
  return (
    <button
      type="button"
      aria-label={icon}
      aria-pressed={on}
      className={`flex h-[18px] w-[33px] shrink-0 items-center justify-center ${on ? "rounded-[3px] border border-[#666] bg-linear-to-b from-[#cdcdcd] to-[#f0f0f0]" : ""}`}
    >
      <Icon size={16}>{ICONS[icon]}</Icon>
    </button>
  );
}

function CommandBar() {
  return (
    <section className="flex h-[23px] shrink-0 items-center overflow-hidden bg-[#f0f0f0] pl-[3px]">
      <div className="relative h-[18px] min-w-0 flex-1">
        <select aria-label="Command" className="block h-[18px] w-full appearance-none border border-[#d8d8d8] border-t-[#a0a0a0] bg-white"><option /></select>
        <svg width="6" height="4" className="pointer-events-none absolute top-2 right-1" aria-hidden="true"><path d="M0 0 H6 L3 4 Z" fill="#111" /></svg>
      </div>
      <button type="button" aria-label="folder" className="flex w-7 shrink-0 justify-center"><Icon size={14}>{ICONS.folder}</Icon></button>
      <Snap icon="snapFoot" on />
      <Snap icon="snapX" on />
      <Snap icon="snapEnd" on />
      <Snap icon="snapQuad" />
      <Snap icon="snapMid" on />
      <Snap icon="snapNear" />
      <Snap icon="magnet" on />
      <span className="ml-px h-5 w-px shrink-0 bg-[#a8a8a8]" />
      <div className="flex w-[197px] shrink-0 items-center">
        <button type="button" aria-label="dimension hint" className="ml-3.5 flex"><Icon size={18}>{ICONS.dimbulb}</Icon></button>
        <button type="button" aria-label="text hint" className="ml-4 flex"><Icon size={18}>{ICONS.textbulb}</Icon></button>
        <span className="mx-2.5 h-4 w-px bg-[#a8a8a8]" />
        <button type="button" aria-label="line weight" className="flex"><Icon size={18}>{ICONS.lineweight}</Icon></button>
        <button type="button" aria-label="crosshair" className="ml-4 flex"><Icon size={18}>{ICONS.crosshair}</Icon></button>
        <button type="button" className="ml-3.5 font-['Liberation_Sans',sans-serif] text-[11px] leading-4 font-bold">A..Z</button>
        <button type="button" aria-label="window" className="ml-3.5 flex"><Icon size={14}>{ICONS.window}</Icon></button>
      </div>
    </section>
  );
}

function StatusBar() {
  const cell = "flex h-[19px] shrink-0 items-center border-r border-[#d4d0d0]";
  return (
    <footer className={`flex h-[21px] shrink-0 items-center overflow-hidden border-t border-[#8c8c8c] bg-[#f0eeee] text-[10px] leading-4 whitespace-nowrap text-[#222] ${UI}`}>
      <span className={`${cell} w-[98px] justify-center`}>トラップ</span>
      <span className="flex h-[19px] min-w-0 flex-1 items-center border-r border-[#d4d0d0] pl-1">トラップ範囲２を入力して下さい</span>
      <span className={`${cell} w-[70px] justify-center font-['DejaVu_Sans',sans-serif] text-[13px]`}>↺</span>
      <span className={`${cell} w-[63px] pl-1`}>S 0.538</span>
      <span className={`${cell} w-[23px] justify-center`}><Icon size={16}>{ICONS.gridsnap}</Icon></span>
      <span className={`${cell} w-[42px] justify-center`}>1</span>
      <span className={`${cell} w-6 justify-center`}><Icon size={16}>{ICONS.origin}</Icon></span>
      <span className={`${cell} w-[78px] pl-0.5`}>X 112.000</span>
      <span className={`${cell} w-[77px] pl-1`}>Y 158.000</span>
      <span className="flex w-[45px] shrink-0 justify-between overflow-hidden pl-1"><span>L</span><span className="w-4 overflow-hidden">296</span></span>
      <svg width="13" height="12" className="shrink-0" aria-hidden="true"><path d="M10.500 2 V12 M7.500 5 V12 M4.500 8 V12" stroke="#b0b0b0" strokeDasharray="2 1" /></svg>
    </footer>
  );
}

export default function App() {
  return (
    <div className="flex h-screen w-full flex-col overflow-hidden border-t-2 border-r border-b-2 border-l border-[#1c2a44] bg-[#b9d1ea] pr-[5px] pb-1 pl-[5px]">
      <TitleBar />
      <MenuBar />
      <Toolbars />
      <div className="flex min-h-0 flex-1">
        <Palette />
        <Canvas />
        <VerticalGrip />
        <SidePanel />
      </div>
      <CommandBar />
      <StatusBar />
    </div>
  );
}
